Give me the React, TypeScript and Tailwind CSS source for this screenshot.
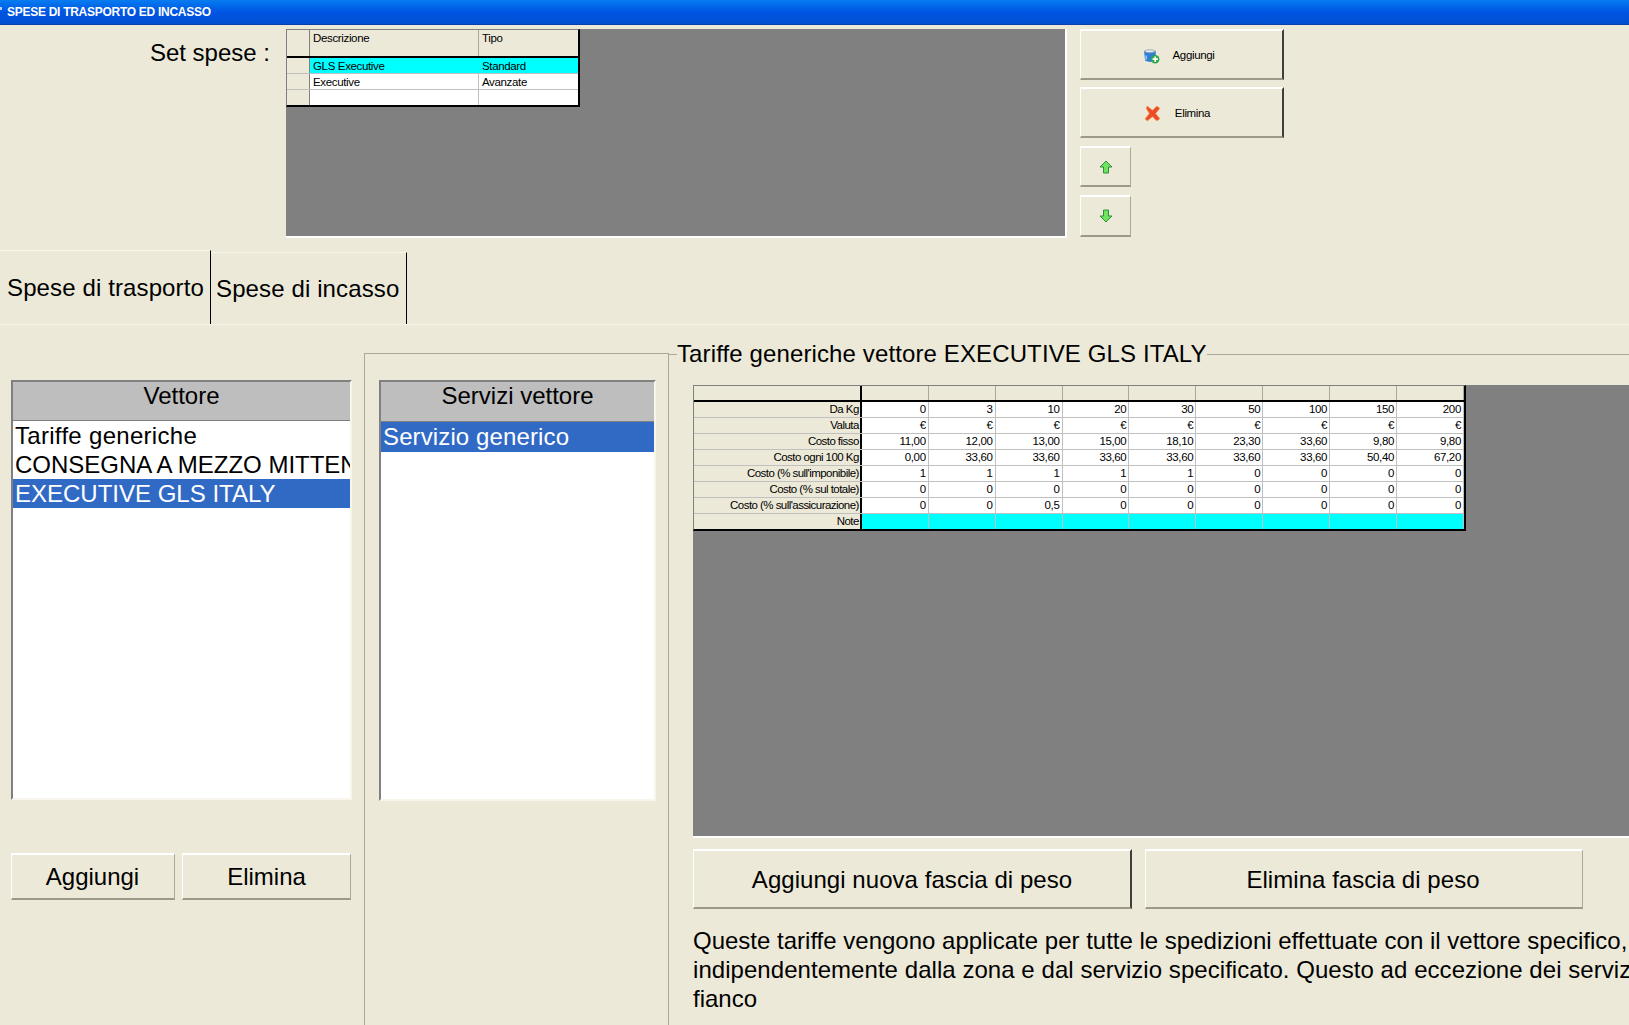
const columns = [
  ["0", "€", "11,00", "0,00", "1", "0", "0"],
  ["3", "€", "12,00", "33,60", "1", "0", "0"],
  ["10", "€", "13,00", "33,60", "1", "0", "0,5"],
  ["20", "€", "15,00", "33,60", "1", "0", "0"],
  ["30", "€", "18,10", "33,60", "1", "0", "0"],
  ["50", "€", "23,30", "33,60", "0", "0", "0"],
  ["100", "€", "33,60", "33,60", "0", "0", "0"],
  ["150", "€", "9,80", "50,40", "0", "0", "0"],
  ["200", "€", "9,80", "67,20", "0", "0", "0"],
];

const rowLabels = [
  "Da Kg",
  "Valuta",
  "Costo fisso",
  "Costo ogni 100 Kg",
  "Costo (% sull'imponibile)",
  "Costo (% sul totale)",
  "Costo (% sull'assicurazione)",
];

const btn =
  "flex items-center justify-center border-t-2 border-l border-t-white border-l-white border-r border-b-2 border-r-[#aca899] border-b-[#9c9988] bg-[#ece9d8] text-black";
const btnDark =
  "flex items-center justify-center border-t-2 border-l border-t-white border-l-white border-r-2 border-b-2 border-r-[#3f3e38] border-b-[#9c9988] bg-[#ece9d8] text-black";

const AddIcon = () => (
  <svg width="17" height="17" viewBox="0 0 16 16">
    <path d="M1 4 L12 4 L12 13 Q7 15 2 13 Z" fill="#2f7fd0" />
    <path d="M1 4 Q6 1 12 4 Q6 7 1 4 Z" fill="#dfe6ee" stroke="#7d93ac" strokeWidth="0.6" />
    <path d="M3 8 L3 12" stroke="#9ccbf2" strokeWidth="1.4" />
    <circle cx="11.5" cy="11.5" r="4" fill="#2aa84a" />
    <path d="M11.5 9 V14 M9 11.5 H14" stroke="#fff" strokeWidth="1.6" />
  </svg>
);

const DeleteIcon = () => (
  <svg width="17" height="17" viewBox="0 0 16 16">
    <path
      d="M3 1 L8 5 L12 1 L15 3 L11 8 L15 13 L12 15 L8 11 L3 15 L1 13 L5 8 L2 3 Z"
      fill="#ee4b2b"
      stroke="#f4a23c"
      strokeWidth="0.5"
    />
  </svg>
);

const ArrowIcon = ({ down }: { down?: boolean }) => (
  <svg width="14" height="14" viewBox="0 0 14 14" className={down ? "rotate-180" : ""}>
    <path d="M7 1 L13 7 L9.5 7 L9.5 13 L4.5 13 L4.5 7 L1 7 Z" fill="#6fe25f" stroke="#2f8f3a" strokeWidth="1" />
  </svg>
);

export default function App() {
  return (
    <div className="w-[1629px] h-[1025px] overflow-hidden bg-[#ece9d8] font-['Liberation_Sans',Arial,sans-serif] text-black">
      {/* title bar */}
      <div className="h-[25px] flex items-center bg-gradient-to-b from-[#0a7cf0] via-[#0054e3] to-[#0350d0] border-b border-[#0a3fb0] text-white text-[12px] font-bold tracking-[-0.28px]">
        <div className="w-[2px] h-[3px] mb-[8px] mr-[5px] bg-white/70" />
        SPESE DI TRASPORTO ED INCASSO
      </div>

      {/* set spese */}
      <div className="h-[225px] flex pt-[4px]">
        <div className="w-[270px] shrink-0 text-right text-[24px] leading-[28px] pt-[10px]">Set spese :</div>
        <div className="ml-[16px] w-[781px] h-[209px] bg-[#808080] border-b-2 border-r-2 border-white shrink-0">
          <div className="w-[294px] bg-white border-l border-t border-l-[#808080] border-t-[#808080] border-r-2 border-b-2 border-r-black border-b-black text-[11.5px] leading-[16px] tracking-[-0.35px]">
            <div className="flex h-[28px] bg-[#ece9d8] border-b-2 border-black">
              <div className="w-[23px] border-r border-[#808080]" />
              <div className="w-[169px] pl-[3px] border-r border-[#aca899]">Descrizione</div>
              <div className="flex-1 pl-[3px]">Tipo</div>
            </div>
            <div className="flex h-[16px] bg-[#00ffff] border-b border-[#c0c0c0]">
              <div className="w-[23px] bg-[#ece9d8] border-r border-[#808080]" />
              <div className="w-[169px] pl-[3px]">GLS Executive</div>
              <div className="flex-1 pl-[3px]">Standard</div>
            </div>
            <div className="flex h-[16px] border-b border-[#c0c0c0]">
              <div className="w-[23px] bg-[#ece9d8] border-r border-[#808080]" />
              <div className="w-[169px] pl-[3px] border-r border-[#c0c0c0]">Executive</div>
              <div className="flex-1 pl-[3px]">Avanzate</div>
            </div>
            <div className="flex h-[15px]">
              <div className="w-[23px] bg-[#ece9d8] border-r border-[#808080]" />
              <div className="w-[169px] border-r border-[#c0c0c0]" />
            </div>
          </div>
        </div>
        <div className="ml-[13px] flex flex-col w-[204px] text-[11.5px] tracking-[-0.35px]">
          <button className={`${btnDark} h-[51px] gap-[13px] pr-[6px] pt-[2px]`}>
            <AddIcon />
            <span>Aggiungi</span>
          </button>
          <button className={`${btnDark} h-[51px] mt-[7px] gap-[14px] pr-[9px] pt-[2px]`}>
            <DeleteIcon />
            <span>Elimina</span>
          </button>
          <button className={`${btn} w-[51px] h-[41px] mt-[8px]`}>
            <ArrowIcon />
          </button>
          <button className={`${btn} w-[51px] h-[42px] mt-[8px]`}>
            <ArrowIcon down />
          </button>
        </div>
      </div>

      {/* tabs */}
      <div className="h-[75px] flex border-b border-[#f8f6ec] text-[24px] leading-[28px]">
        <div className="w-[211px] pl-[7px] pt-[23px] border-t border-[#f8f6ec] border-r border-r-black whitespace-nowrap tracking-[0.12px]">
          Spese di trasporto
        </div>
        <div className="w-[196px] mt-[2px] pl-[5px] pt-[22px] border-t border-[#f8f6ec] border-r border-r-black whitespace-nowrap tracking-[0.12px]">
          Spese di incasso
        </div>
      </div>

      <div className="flex h-[700px]">
        {/* vettori */}
        <div className="w-[364px] shrink-0 pl-[11px] pt-[55px]">
          <div className="w-[341px] h-[420px] flex flex-col bg-white border-l-2 border-t-2 border-l-[#808080] border-t-[#808080] border-r-2 border-b-2 border-r-[#f8f6ec] border-b-[#f8f6ec] overflow-hidden">
            <div className="h-[39px] shrink-0 bg-[#bebebe] border-b border-[#808080] text-center text-[24px] leading-[28px]">
              Vettore
            </div>
            <div className="text-[24px] leading-[29px] whitespace-nowrap pl-[2px] tracking-[0.3px]">Tariffe generiche</div>
            <div className="text-[24px] leading-[29px] whitespace-nowrap pl-[2px]">CONSEGNA A MEZZO MITTENTE</div>
            <div className="text-[24px] leading-[29px] whitespace-nowrap pl-[2px] bg-[#316ac5] text-white">
              EXECUTIVE GLS ITALY
            </div>
          </div>
          <div className="flex gap-[7px] mt-[53px] text-[24px]">
            <button className={`${btn} w-[164px] h-[47px] pr-[1px]`}>Aggiungi</button>
            <button className={`${btn} w-[169px] h-[47px]`}>Elimina</button>
          </div>
        </div>

        {/* servizi */}
        <div className="w-[305px] shrink-0 mt-[28px] border-l border-t border-r border-[#aca899] pl-[14px] pt-[26px]">
          <div className="w-[277px] h-[421px] flex flex-col bg-white border-l-2 border-t-2 border-l-[#808080] border-t-[#808080] border-r-2 border-b-2 border-r-[#f8f6ec] border-b-[#f8f6ec]">
            <div className="h-[40px] shrink-0 bg-[#bebebe] border-b border-[#808080] text-center text-[24px] leading-[28px]">
              Servizi vettore
            </div>
            <div className="h-[30px] text-[24px] leading-[30px] pl-[2px] bg-[#316ac5] text-white tracking-[0.12px]">
              Servizio generico
            </div>
          </div>
        </div>

        {/* tariffe */}
        <div className="flex-1 min-w-0 pt-[15px]">
          <div className="flex items-center h-[28px]">
            <div className="w-[8px] border-t border-[#aca899]" />
            <div className="text-[24px] leading-[28px] whitespace-nowrap tracking-[0.12px]">
              Tariffe generiche vettore EXECUTIVE GLS ITALY
            </div>
            <div className="flex-1 border-t border-[#aca899]" />
          </div>
          <div className="pl-[24px] pt-[17px]">
            <div className="h-[453px] bg-[#808080] border-b-2 border-white">
              <div className="w-[773px] bg-white border-l border-t border-l-[#808080] border-t-[#808080] border-r-2 border-b-2 border-r-black border-b-black text-[11.5px] leading-[15px] tracking-[-0.35px]">
                <div className="flex h-[16px] bg-[#ece9d8] border-b-2 border-black">
                  <div className="w-[168px] border-r-2 border-black" />
                  {columns.map((_, i) => (
                    <div key={i} className="w-[67px] border-r border-[#aca899]" />
                  ))}
                </div>
                {rowLabels.map((label, r) => (
                  <div key={label} className="flex h-[16px] border-b border-[#c0c0c0]">
                    <div className="w-[168px] bg-[#ece9d8] border-r-2 border-black text-right pr-[1px] whitespace-nowrap tracking-[-0.55px]">
                      {label}
                    </div>
                    {columns.map((col, i) => (
                      <div key={i} className="w-[67px] border-r border-[#c0c0c0] text-right pr-[2px]">
                        {col[r]}
                      </div>
                    ))}
                  </div>
                ))}
                <div className="flex h-[15px]">
                  <div className="w-[168px] bg-[#ece9d8] border-r-2 border-black text-right pr-[1px] tracking-[-0.55px]">
                    Note
                  </div>
                  {columns.map((_, i) => (
                    <div key={i} className="w-[67px] bg-[#00ffff] border-r border-[#c0c0c0]" />
                  ))}
                </div>
              </div>
            </div>
            <div className="flex gap-[13px] mt-[11px] text-[24px]">
              <button className={`${btnDark} w-[439px] h-[60px] pt-[2px] tracking-[0.05px]`}>Aggiungi nuova fascia di peso</button>
              <button className={`${btn} w-[438px] h-[60px] pt-[2px] pr-[2px] tracking-[0.05px]`}>Elimina fascia di peso</button>
            </div>
            <div className="mt-[17px] text-[24px] leading-[29px] whitespace-nowrap">
              <div>Queste tariffe vengono applicate per tutte le spedizioni effettuate con il vettore specifico,</div>
              <div className="tracking-[0.05px]">indipendentemente dalla zona e dal servizio specificato. Questo ad eccezione dei servizi</div>
              <div>fianco</div>
            </div>
          </div>
        </div>
      </div>
    </div>
  );
}
